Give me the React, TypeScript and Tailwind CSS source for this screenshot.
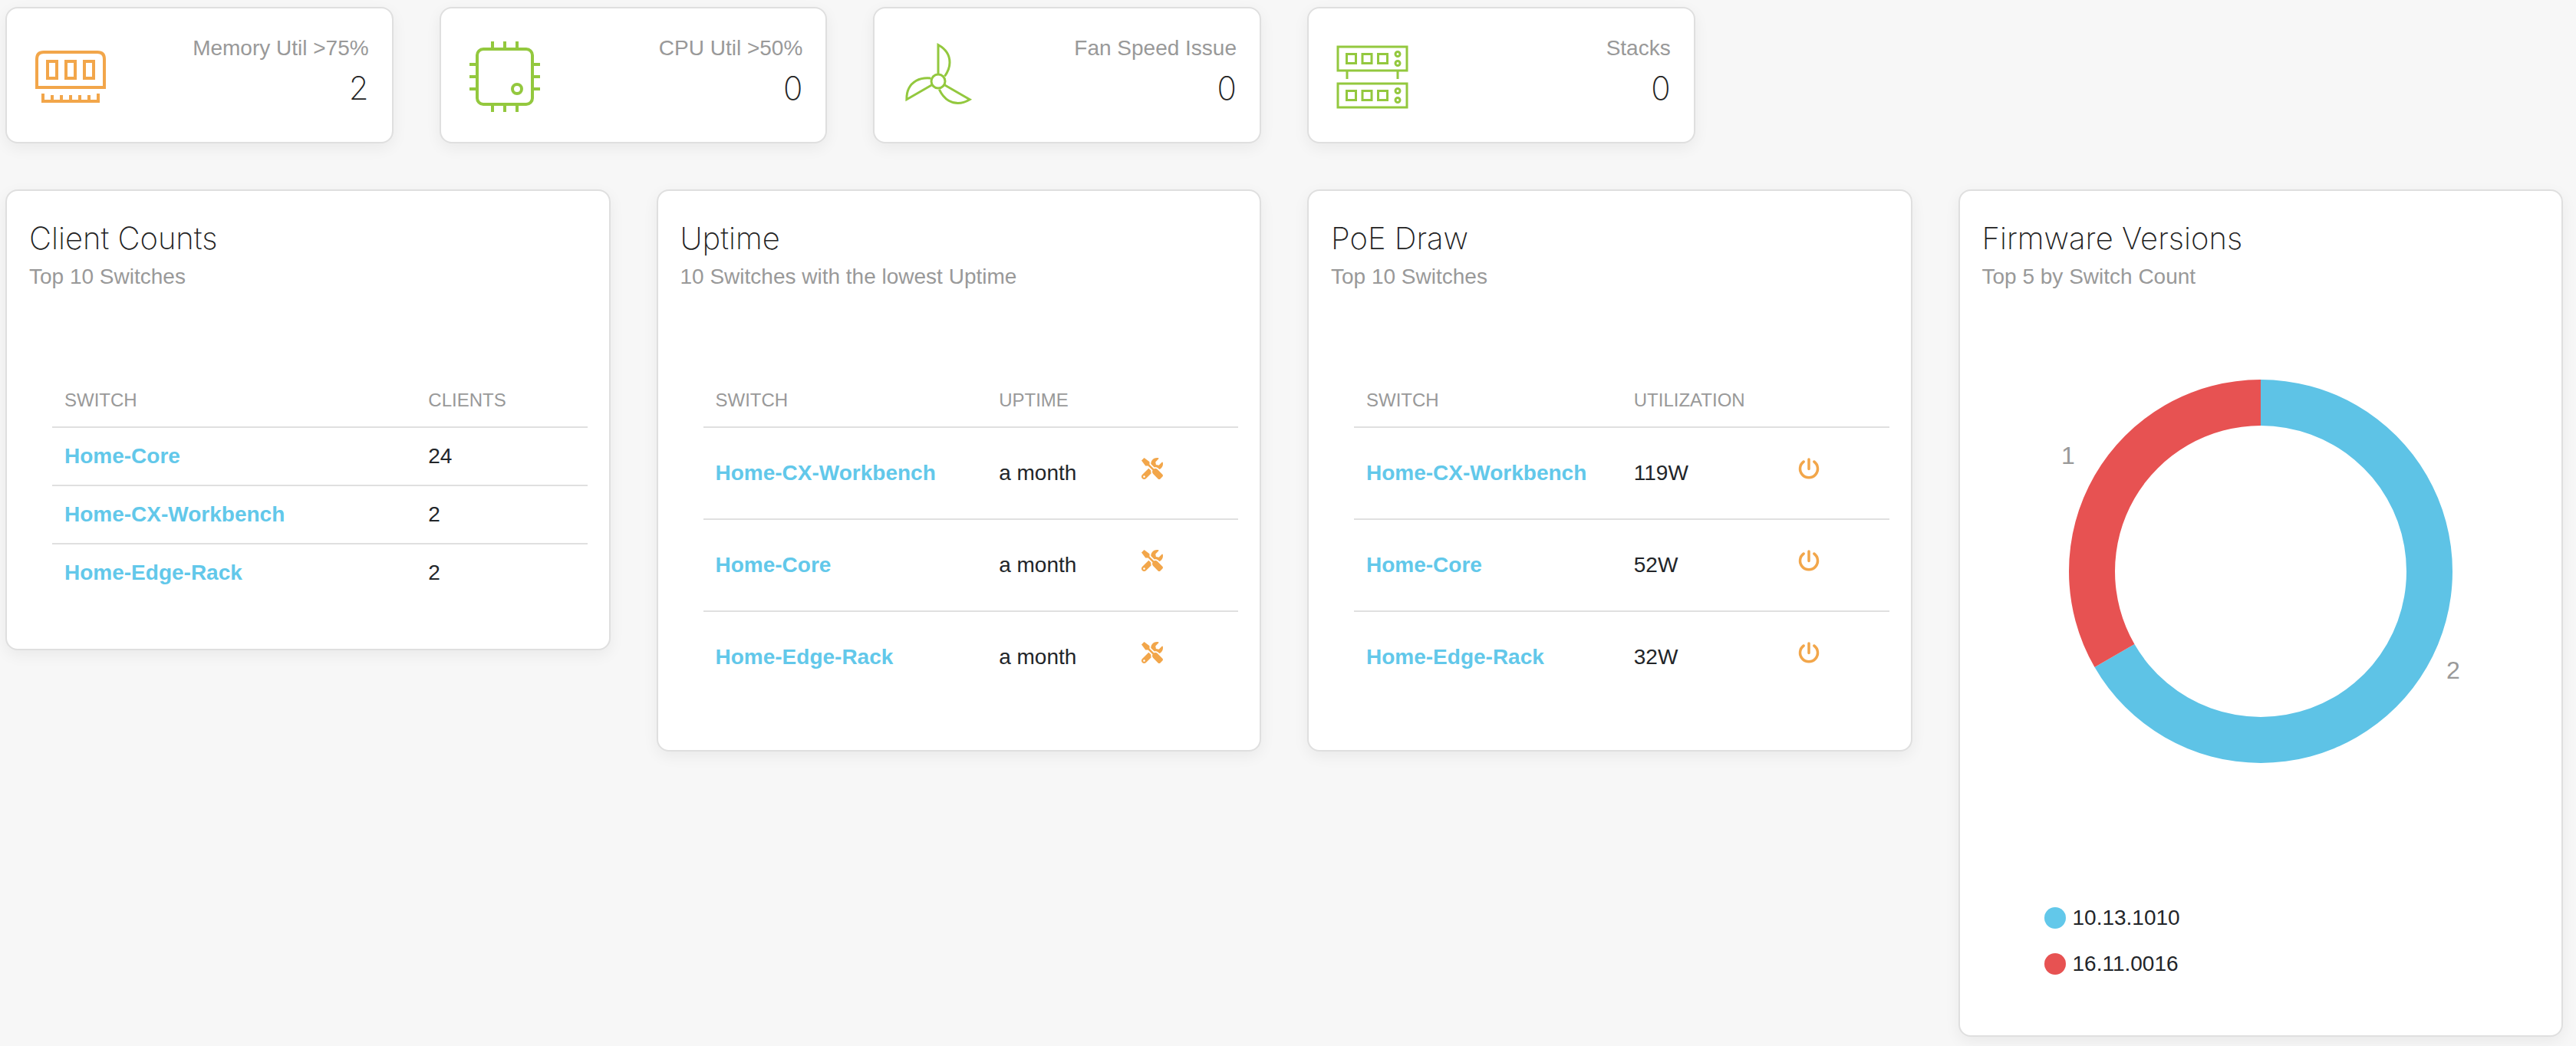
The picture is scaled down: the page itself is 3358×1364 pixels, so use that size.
import type { ReactNode } from 'react';
import { FaTools } from 'react-icons/fa';

const card =
  "min-w-0 rounded-2xl border-2 border-[#dfdfdf] bg-white shadow-[0_6px_20px_rgba(0,0,0,0.06)]";

function MemoryIcon() {
  return (
    <svg viewBox="0 0 96 96" className="size-24 text-[#f2a64a]" fill="none" stroke="currentColor" strokeWidth="4" aria-hidden="true">
      <path d="M4 62V25q0-9 9-9h70q9 0 9 9v37z" />
      <path d="M18 28h12v22H18zM42 28h12v22H42zM66 28h12v22H66z" />
      <path d="M12 70v10h72V70M24 72v8M36 72v8M48 72v8M60 72v8M72 72v8" />
    </svg>
  );
}

function CpuIcon() {
  return (
    <svg viewBox="0 0 96 96" className="size-24 text-[#93c83e]" fill="none" stroke="currentColor" strokeWidth="4" aria-hidden="true">
      <rect x="12" y="12" width="72" height="72" rx="8" />
      <path d="M32 2v9M48 2v9M64 2v9M32 85v9M48 85v9M64 85v9M2 32h9M2 48h9M2 64h9M85 32h9M85 48h9M85 64h9" />
      <circle cx="64" cy="64" r="6" />
    </svg>
  );
}

function FanIcon() {
  const blade = 'M0 -9V-47.500C10 -42 15 -34 15 -24.500C15 -17 12 -11.500 8.500 -6.500';
  return (
    <svg viewBox="-48 -54 96 96" className="size-24 text-[#93c83e]" fill="none" stroke="currentColor" strokeWidth="3" aria-hidden="true">
      <circle r="9" />
      <path d={blade} />
      <path d={blade} transform="rotate(120)" />
      <path d={blade} transform="rotate(240)" />
    </svg>
  );
}

function StackUnit({ y }: { y: number }) {
  return (
    <g transform={`translate(0 ${y})`}>
      <rect x="3" y="1" width="90" height="31" />
      <path d="M14.500 10.500h12v12h-12zM35 10.500h12v12H35zM55.500 10.500h12v12h-12z" />
      <circle cx="81" cy="10.500" r="3" />
      <circle cx="81" cy="22.500" r="3" />
    </g>
  );
}

function StackIcon() {
  return (
    <svg viewBox="0 0 96 96" className="size-24 text-[#93c83e]" fill="none" stroke="currentColor" strokeWidth="3" aria-hidden="true">
      <StackUnit y={8} />
      <path d="M15 41v10M81 41v10" />
      <StackUnit y={56} />
    </svg>
  );
}

function PowerIcon() {
  return (
    <svg viewBox="0 0 28 28" className="size-7" fill="none" stroke="currentColor" strokeWidth="3.500" strokeLinecap="round" aria-hidden="true">
      <path d="M14 2v12.500M7.200 5a11.500 11.500 0 1 0 13.600 0" />
    </svg>
  );
}

function Stat({ icon, label, value }: { icon: ReactNode; label: string; value: number }) {
  return (
    <section className={`${card} flex items-start justify-between pt-[30px] pr-[30px] pb-[37px] pl-[35px]`}>
      <div className="mt-[11px] shrink-0">{icon}</div>
      <div className="text-right">
        <p className="text-[28px] leading-[44px] text-[#999]">{label}</p>
        <p className="mt-1 font-['Inter'] text-[42px] leading-[52px] font-extralight text-[#222]">{value}</p>
      </div>
    </section>
  );
}

function Panel({ title, subtitle, children }: { title: string; subtitle: string; children: ReactNode }) {
  return (
    <section className={`${card} pt-[33px] pb-[63px]`}>
      <header className="px-[29px]">
        <h2 className="font-['Inter'] text-[40px] leading-[58px] font-extralight text-[#222]">{title}</h2>
        <p className="text-[28px] leading-[42px] text-[#999]">{subtitle}</p>
      </header>
      {children}
    </section>
  );
}

type Row = { name: string; value: string };

function SwitchTable({
  column,
  rows,
  widths,
  action,
}: {
  column: string;
  rows: Row[];
  widths: [string, string];
  action?: { label: string; icon: ReactNode };
}) {
  return (
    <div className="mt-[106px] mr-7 ml-[59px]">
      <table className="w-full table-fixed border-collapse text-left">
        <thead>
          <tr className="border-b-2 border-[#e0e0e0] text-[24px] leading-[36px] text-[#999]">
            <th scope="col" className={`${widths[0]} px-4 py-4 font-normal`}>SWITCH</th>
            <th scope="col" className={`${widths[1]} px-4 py-4 font-normal`}>{column}</th>
            {action && <td />}
          </tr>
        </thead>
        <tbody>
          {rows.map((row) => (
            <tr
              key={row.name}
              className={`${action ? 'h-[120px] last:h-[118px]' : 'h-[76px] last:h-[74px]'} border-b-2 border-[#e0e0e0] text-[28px] leading-[42px] whitespace-nowrap text-[#222529] last:border-b-0`}
            >
              <td className="px-4">
                <a href="#" className="font-bold text-[#62c8ea]">{row.name}</a>
              </td>
              <td className="px-4">{row.value}</td>
              {action && (
                <td className="pb-3 pl-3.5">
                  <button type="button" aria-label={`${action.label} ${row.name}`} className="block text-[#f2a64a]">
                    {action.icon}
                  </button>
                </td>
              )}
            </tr>
          ))}
        </tbody>
      </table>
    </div>
  );
}

function FirmwareChart() {
  return (
    <svg viewBox="0 0 640 500" className="mx-auto mt-[113px] block w-[640px] max-w-full" role="img" aria-label="Firmware versions by switch count">
      <path d="M320 0A250 250 0 1 1 103.490 375L155.460 345A190 190 0 1 0 320 60Z" fill="#5ec3e6" />
      <path d="M320 0A250 250 0 0 0 103.490 375L155.460 345A190 190 0 0 1 320 60Z" fill="#e75252" />
      <text x="69" y="110" textAnchor="middle" fontSize="32" fill="#999">1</text>
      <text x="571" y="390" textAnchor="middle" fontSize="32" fill="#999">2</text>
    </svg>
  );
}

export default function App() {
  return (
    <main className="min-h-screen bg-[#f7f7f7] pt-[9px] pr-[17px] pb-[13px] pl-[7px] font-['Liberation_Sans',sans-serif]">
      <div className="grid grid-cols-6 gap-[60px]">
        <Stat icon={<MemoryIcon />} label="Memory Util >75%" value={2} />
        <Stat icon={<CpuIcon />} label="CPU Util >50%" value={0} />
        <Stat icon={<FanIcon />} label="Fan Speed Issue" value={0} />
        <Stat icon={<StackIcon />} label="Stacks" value={0} />
      </div>
      <div className="mt-[60px] grid grid-cols-4 items-start gap-[60px]">
        <Panel title="Client Counts" subtitle="Top 10 Switches">
          <SwitchTable
            column="CLIENTS"
            widths={['w-[68%]', 'w-[32%]']}
            rows={[
              { name: 'Home-Core', value: '24' },
              { name: 'Home-CX-Workbench', value: '2' },
              { name: 'Home-Edge-Rack', value: '2' },
            ]}
          />
        </Panel>
        <Panel title="Uptime" subtitle="10 Switches with the lowest Uptime">
          <SwitchTable
            column="UPTIME"
            widths={['w-[53%]', 'w-[27%]']}
            action={{ label: 'Troubleshoot', icon: <FaTools className="size-7" /> }}
            rows={[
              { name: 'Home-CX-Workbench', value: 'a month' },
              { name: 'Home-Core', value: 'a month' },
              { name: 'Home-Edge-Rack', value: 'a month' },
            ]}
          />
        </Panel>
        <Panel title="PoE Draw" subtitle="Top 10 Switches">
          <SwitchTable
            column="UTILIZATION"
            widths={['w-[50%]', 'w-[31%]']}
            action={{ label: 'Power details for', icon: <PowerIcon /> }}
            rows={[
              { name: 'Home-CX-Workbench', value: '119W' },
              { name: 'Home-Core', value: '52W' },
              { name: 'Home-Edge-Rack', value: '32W' },
            ]}
          />
        </Panel>
        <Panel title="Firmware Versions" subtitle="Top 5 by Switch Count">
          <FirmwareChart />
          <ul className="mt-[172px] ml-[110px] text-[28px] leading-[60px] text-[#222529]">
            <li className="flex items-center gap-[9px]">
              <span className="size-7 rounded-full bg-[#62c8ea]" />
              10.13.1010
            </li>
            <li className="flex items-center gap-[9px]">
              <span className="size-7 rounded-full bg-[#e75252]" />
              16.11.0016
            </li>
          </ul>
        </Panel>
      </div>
    </main>
  );
}
